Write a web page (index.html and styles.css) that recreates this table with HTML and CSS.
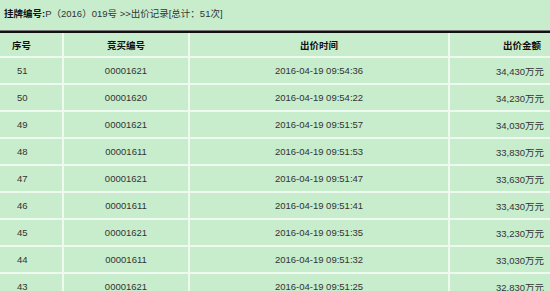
FILE: index.html
```html
<!DOCTYPE html>
<html lang="zh">
<head>
<meta charset="utf-8">
<link rel="stylesheet" href="styles.css">
</head>
<body>
<div class="title"><b>挂牌编号:</b>P（2016）019号 &gt;&gt;出价记录[总计：51次]</div>
<div class="rule">
<table class="bids">
<colgroup><col class="c1"><col class="c2"><col class="c3"><col class="c4"></colgroup>
<thead>
<tr><th class="seq">序号</th><th>竞买编号</th><th>出价时间</th><th class="amt">出价金额</th></tr>
</thead>
<tbody>
<tr><td class="seq">51</td><td>00001621</td><td>2016-04-19 09:54:36</td><td class="amt">34,430万元</td></tr>
<tr><td class="seq">50</td><td>00001620</td><td>2016-04-19 09:54:22</td><td class="amt">34,230万元</td></tr>
<tr><td class="seq">49</td><td>00001621</td><td>2016-04-19 09:51:57</td><td class="amt">34,030万元</td></tr>
<tr><td class="seq">48</td><td>00001611</td><td>2016-04-19 09:51:53</td><td class="amt">33,830万元</td></tr>
<tr><td class="seq">47</td><td>00001621</td><td>2016-04-19 09:51:47</td><td class="amt">33,630万元</td></tr>
<tr><td class="seq">46</td><td>00001611</td><td>2016-04-19 09:51:41</td><td class="amt">33,430万元</td></tr>
<tr><td class="seq">45</td><td>00001621</td><td>2016-04-19 09:51:35</td><td class="amt">33,230万元</td></tr>
<tr><td class="seq">44</td><td>00001611</td><td>2016-04-19 09:51:32</td><td class="amt">33,030万元</td></tr>
<tr><td class="seq">43</td><td>00001621</td><td>2016-04-19 09:51:25</td><td class="amt">32,830万元</td></tr>
</tbody>
</table>
</div>
</body>
</html>
```
FILE: styles.css
```css
html, body {
  margin: 0;
  padding: 0;
  background: #c7edcc;
  overflow: hidden;
}
body {
  font-family: "Liberation Sans", Arial, "Noto Sans CJK SC", sans-serif;
  font-size: 9.5px;
  color: #333;
}
.title {
  height: 30px;
  line-height: 28px;
  padding-left: 4px;
  color: #333;
}
.title b {
  color: #111;
}
.rule {
  border-top: 1px solid #777;
}
.bids {
  width: 100%;
  table-layout: fixed;
  border-collapse: separate;
  border-spacing: 0;
  border-top: 2px solid #111;
}
.c1 { width: 64px; }
.c2 { width: 126px; }
.c3 { width: 260px; }
.c4 { width: auto; }
.bids th, .bids td {
  padding: 0;
  text-align: center;
  border-bottom: 2px solid #eef9ef;
  border-right: 2px solid #eef9ef;
  white-space: nowrap;
}
.bids th:last-child, .bids td:last-child {
  border-right: 0;
}
.bids th {
  height: 23px;
  font-weight: bold;
  color: #111;
}
.bids td {
  height: 25px;
}
.bids .seq {
  text-align: left;
  padding-left: 17px;
}
.bids th.seq {
  padding-left: 12px;
}
.bids .amt {
  text-align: right;
  padding-right: 6px;
}
.bids th.amt {
  padding-right: 9px;
}
```
